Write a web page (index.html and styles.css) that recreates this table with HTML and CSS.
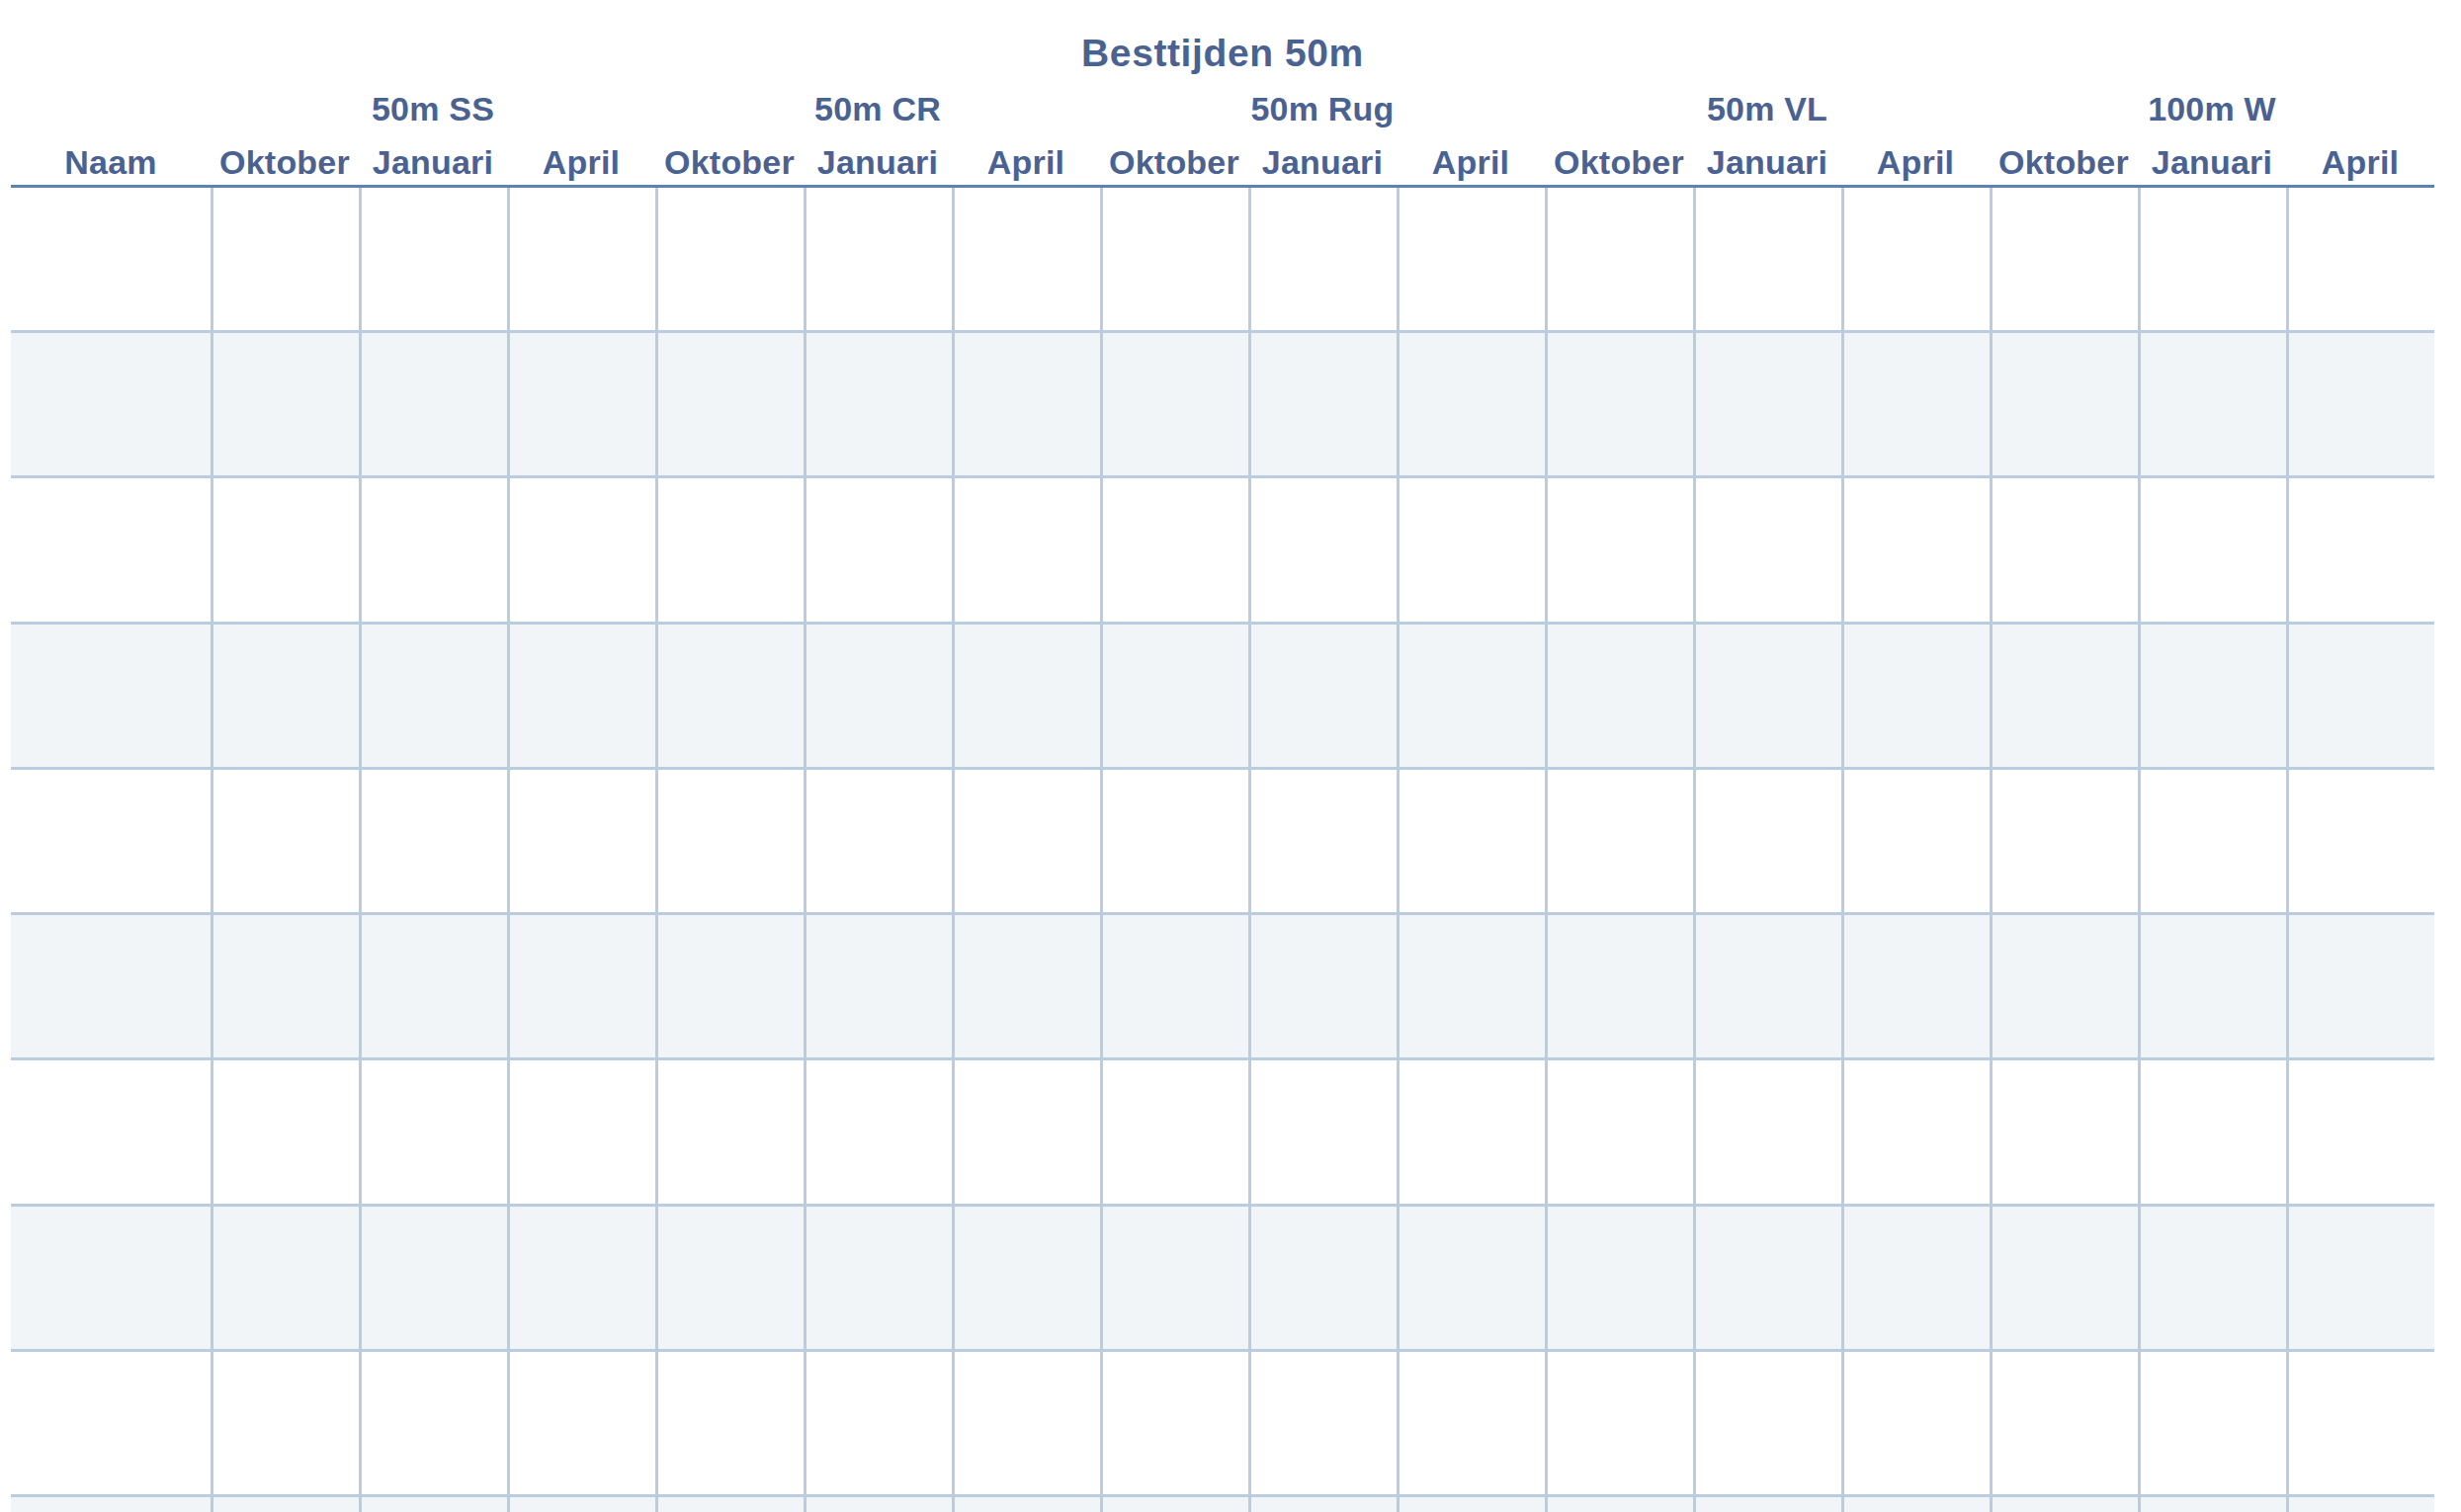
FILE: index.html
```html
<!DOCTYPE html>
<html lang="nl">
<head>
<meta charset="utf-8">
<title>Besttijden 50m</title>
<link rel="stylesheet" href="styles.css">
</head>
<body>
<div class="sheet">
  <h1 class="title">Besttijden 50m</h1>
  <div class="head groups">
    <div></div>
    <div class="span3">50m SS</div>
    <div class="span3">50m CR</div>
    <div class="span3">50m Rug</div>
    <div class="span3">50m VL</div>
    <div class="span3">100m W</div>
  </div>
  <div class="head months">
    <div>Naam</div>
    <div>Oktober</div><div>Januari</div><div>April</div>
    <div>Oktober</div><div>Januari</div><div>April</div>
    <div>Oktober</div><div>Januari</div><div>April</div>
    <div>Oktober</div><div>Januari</div><div>April</div>
    <div>Oktober</div><div>Januari</div><div>April</div>
  </div>
  <div class="rows">
    <div class="row"><div class="cell"></div><div class="cell"></div><div class="cell"></div><div class="cell"></div><div class="cell"></div><div class="cell"></div><div class="cell"></div><div class="cell"></div><div class="cell"></div><div class="cell"></div><div class="cell"></div><div class="cell"></div><div class="cell"></div><div class="cell"></div><div class="cell"></div><div class="cell"></div></div>
    <div class="row"><div class="cell"></div><div class="cell"></div><div class="cell"></div><div class="cell"></div><div class="cell"></div><div class="cell"></div><div class="cell"></div><div class="cell"></div><div class="cell"></div><div class="cell"></div><div class="cell"></div><div class="cell"></div><div class="cell"></div><div class="cell"></div><div class="cell"></div><div class="cell"></div></div>
    <div class="row"><div class="cell"></div><div class="cell"></div><div class="cell"></div><div class="cell"></div><div class="cell"></div><div class="cell"></div><div class="cell"></div><div class="cell"></div><div class="cell"></div><div class="cell"></div><div class="cell"></div><div class="cell"></div><div class="cell"></div><div class="cell"></div><div class="cell"></div><div class="cell"></div></div>
    <div class="row"><div class="cell"></div><div class="cell"></div><div class="cell"></div><div class="cell"></div><div class="cell"></div><div class="cell"></div><div class="cell"></div><div class="cell"></div><div class="cell"></div><div class="cell"></div><div class="cell"></div><div class="cell"></div><div class="cell"></div><div class="cell"></div><div class="cell"></div><div class="cell"></div></div>
    <div class="row"><div class="cell"></div><div class="cell"></div><div class="cell"></div><div class="cell"></div><div class="cell"></div><div class="cell"></div><div class="cell"></div><div class="cell"></div><div class="cell"></div><div class="cell"></div><div class="cell"></div><div class="cell"></div><div class="cell"></div><div class="cell"></div><div class="cell"></div><div class="cell"></div></div>
    <div class="row"><div class="cell"></div><div class="cell"></div><div class="cell"></div><div class="cell"></div><div class="cell"></div><div class="cell"></div><div class="cell"></div><div class="cell"></div><div class="cell"></div><div class="cell"></div><div class="cell"></div><div class="cell"></div><div class="cell"></div><div class="cell"></div><div class="cell"></div><div class="cell"></div></div>
    <div class="row"><div class="cell"></div><div class="cell"></div><div class="cell"></div><div class="cell"></div><div class="cell"></div><div class="cell"></div><div class="cell"></div><div class="cell"></div><div class="cell"></div><div class="cell"></div><div class="cell"></div><div class="cell"></div><div class="cell"></div><div class="cell"></div><div class="cell"></div><div class="cell"></div></div>
    <div class="row"><div class="cell"></div><div class="cell"></div><div class="cell"></div><div class="cell"></div><div class="cell"></div><div class="cell"></div><div class="cell"></div><div class="cell"></div><div class="cell"></div><div class="cell"></div><div class="cell"></div><div class="cell"></div><div class="cell"></div><div class="cell"></div><div class="cell"></div><div class="cell"></div></div>
    <div class="row"><div class="cell"></div><div class="cell"></div><div class="cell"></div><div class="cell"></div><div class="cell"></div><div class="cell"></div><div class="cell"></div><div class="cell"></div><div class="cell"></div><div class="cell"></div><div class="cell"></div><div class="cell"></div><div class="cell"></div><div class="cell"></div><div class="cell"></div><div class="cell"></div></div>
    <div class="row"><div class="cell"></div><div class="cell"></div><div class="cell"></div><div class="cell"></div><div class="cell"></div><div class="cell"></div><div class="cell"></div><div class="cell"></div><div class="cell"></div><div class="cell"></div><div class="cell"></div><div class="cell"></div><div class="cell"></div><div class="cell"></div><div class="cell"></div><div class="cell"></div></div>
  </div>
</div>
</body>
</html>
```

FILE: styles.css
```css
* {
  box-sizing: border-box;
}

html, body {
  margin: 0;
  padding: 0;
  background: #ffffff;
}

body {
  font-family: "Liberation Sans", Arial, Helvetica, sans-serif;
  color: #4a6292;
}

.sheet {
  width: 2452px;
  margin-left: 11px;
}

.title {
  margin: 0;
  padding-top: 30.5px;
  font-size: 39px;
  line-height: 46px;
  height: 76.5px;
  font-weight: bold;
  text-align: center;
  letter-spacing: 0.6px;
}

.head {
  display: grid;
  grid-template-columns: 202px repeat(15, 150px);
  font-size: 34px;
  line-height: 40px;
  font-weight: bold;
  text-align: center;
  letter-spacing: 0.2px;
  white-space: nowrap;
}

.groups {
  margin-top: 13.4px;
}

.span3 {
  grid-column: span 3;
}

.months {
  margin-top: 14.3px;
  padding-bottom: 2.8px;
  border-bottom: 3px solid #5c82b3;
}

.row {
  display: grid;
  grid-template-columns: 202px repeat(15, 150px);
  height: 147.25px;
  border-bottom: 3px solid #b9cce0;
}

.row:nth-child(even) {
  background: #f1f5f7;
}

.cell + .cell {
  border-left: 3px solid #b9cce0;
}
```
